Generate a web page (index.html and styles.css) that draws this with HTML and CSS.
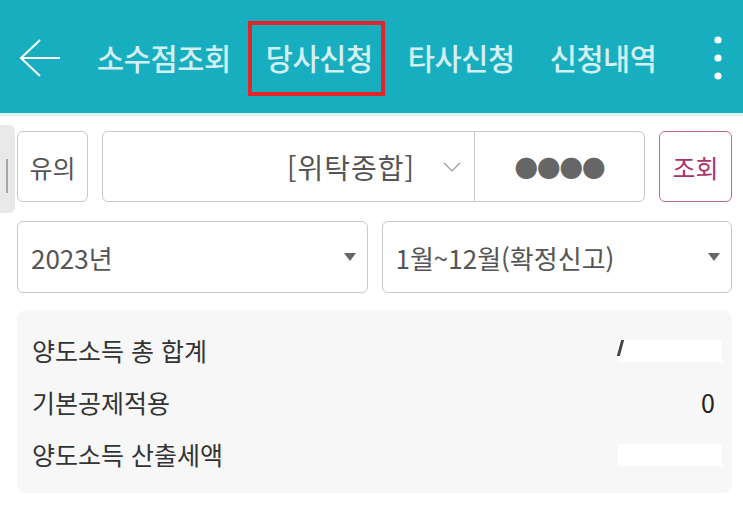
FILE: index.html
```html
<!DOCTYPE html>
<html lang="ko">
<head>
    <meta charset="UTF-8">
    <meta name="viewport" content="width=device-width, initial-scale=1.0">
    <title>양도소득 당사신청</title>
    <link rel="stylesheet" href="styles.css">
</head>
<body>

<div class="app-bar">
    <svg class="back" width="42" height="38" viewBox="0 0 42 38">
        <polyline points="21,1 2,19 21,37" fill="none" stroke="#fff" stroke-width="2"/>
        <line x1="2" y1="19" x2="41" y2="19" stroke="#fff" stroke-width="2"/>
    </svg>
    <div class="tabs">
        <span class="tab">소수점조회</span>
        <span class="tab active">당사신청</span>
        <span class="tab">타사신청</span>
        <span class="tab">신청내역</span>
    </div>
    <svg class="more" width="8" height="44" viewBox="0 0 8 44">
        <circle cx="4" cy="4" r="3.6" fill="#fff"/>
        <circle cx="4" cy="22" r="3.6" fill="#fff"/>
        <circle cx="4" cy="40" r="3.6" fill="#fff"/>
    </svg>
</div>

<div class="content">
    <!-- drawer handle on the left edge -->
    <div class="handle"></div>

    <div class="row">
        <div class="box notice">유의</div>
        <div class="box account">
            <div class="account-select">
                <span class="account-name">[위탁종합]</span>
                <svg width="18" height="10" viewBox="0 0 18 10">
                    <polyline points="1,1 9,9 17,1" fill="none" stroke="#9a9a9a" stroke-width="1.2"/>
                </svg>
            </div>
            <div class="account-pw">●●●●</div>
        </div>
        <div class="box search">조회</div>
    </div>

    <div class="row row-period">
        <div class="box select year">
            <span>2023년</span>
            <span class="caret"></span>
        </div>
        <div class="box select month">
            <span>1월~12월(확정신고)</span>
            <span class="caret"></span>
        </div>
    </div>

    <div class="summary">
        <div class="summary-row">
            <span>양도소득 총 합계</span>
            <span class="masked"><i class="frag"></i></span>
        </div>
        <div class="summary-row">
            <span>기본공제적용</span>
            <span class="value">0</span>
        </div>
        <div class="summary-row">
            <span>양도소득 산출세액</span>
            <span class="masked"></span>
        </div>
    </div>
</div>

</body>
</html>
```

FILE: styles.css
```css
body {
    margin: 0;
    background: #fff;
    font-family: "Noto Sans CJK KR", "Noto Sans", sans-serif;
    color: #333;
}
.app-bar {
    height: 113px;
    background-color: #17afbf;
    border-bottom: 3px solid #dcf3f5;
    display: flex;
    align-items: center;
}
.back {
    margin-left: 19px;
    margin-top: 2px;
}
.tabs {
    display: flex;
    gap: 35px;
    margin-left: 36px;
}
.tab {
    position: relative;
    font-size: 29.5px;
    font-weight: 500;
    line-height: 38px;
    color: #d4eff3;
    letter-spacing: -0.4px;
}
.tab.active::after {
    content: "";
    position: absolute;
    left: -18px;
    right: -12px;
    top: -17px;
    bottom: -20px;
    border: 4px solid #e1252b;
}
.more {
    margin-left: auto;
    margin-right: 21px;
    margin-top: 2px;
}
.content {
    position: relative;
    padding: 15px 11px 0 17px;
}
.handle {
    position: absolute;
    left: 0;
    top: 9px;
    width: 15px;
    height: 88px;
    background: #e9e9e9;
    border-radius: 0 6px 6px 0;
}
.handle::after {
    content: "";
    position: absolute;
    left: 6px;
    top: 34px;
    width: 2px;
    height: 34px;
    background: #a8a8a8;
}
.row {
    display: flex;
    gap: 14px;
    height: 71px;
}
.row-period {
    margin-top: 19px;
    height: 72px;
}
.box {
    box-sizing: border-box;
    border: 1.5px solid #c8c8c8;
    border-radius: 6px;
    background: #fff;
    display: flex;
    align-items: center;
    font-size: 24px;
    color: #555;
}
.notice {
    width: 71px;
    justify-content: center;
    font-size: 25px;
}
.account {
    width: 543px;
}
.account-select {
    width: 372px;
    height: 100%;
    box-sizing: border-box;
    display: flex;
    align-items: center;
    justify-content: flex-end;
    gap: 28px;
    padding-right: 13px;
    border-right: 1.5px solid #c8c8c8;
}
.account-name {
    font-size: 28px;
    letter-spacing: 1px;
    color: #555;
}
.account-pw {
    flex: 1;
    text-align: center;
    font-size: 23.5px;
    letter-spacing: -1px;
    color: #666;
}
.search {
    width: 73px;
    justify-content: center;
    border-color: #c9658c;
    color: #a9336a;
    font-size: 25px;
}
.select {
    flex: 1;
    justify-content: space-between;
    padding: 0 11px 0 13px;
    font-size: 26px;
}
.caret {
    width: 0;
    height: 0;
    border-left: 6px solid transparent;
    border-right: 6px solid transparent;
    border-top: 8px solid #666;
}
.summary {
    margin-top: 17px;
    padding: 14px 17px 13px 15px;
    background: #f7f7f7;
    border-radius: 9px;
}
.summary-row {
    height: 52px;
    display: flex;
    align-items: center;
    justify-content: space-between;
    font-size: 25px;
    color: #333;
}
.value {
    color: #222;
}
.masked {
    width: 104px;
    height: 22px;
    margin-right: -7px;
    background: #fff;
    position: relative;
    top: 1px;
}
.frag {
    position: absolute;
    left: 1px;
    top: 0;
    width: 3px;
    height: 16px;
    background: #444;
    transform: skewX(-15deg);
}
```
